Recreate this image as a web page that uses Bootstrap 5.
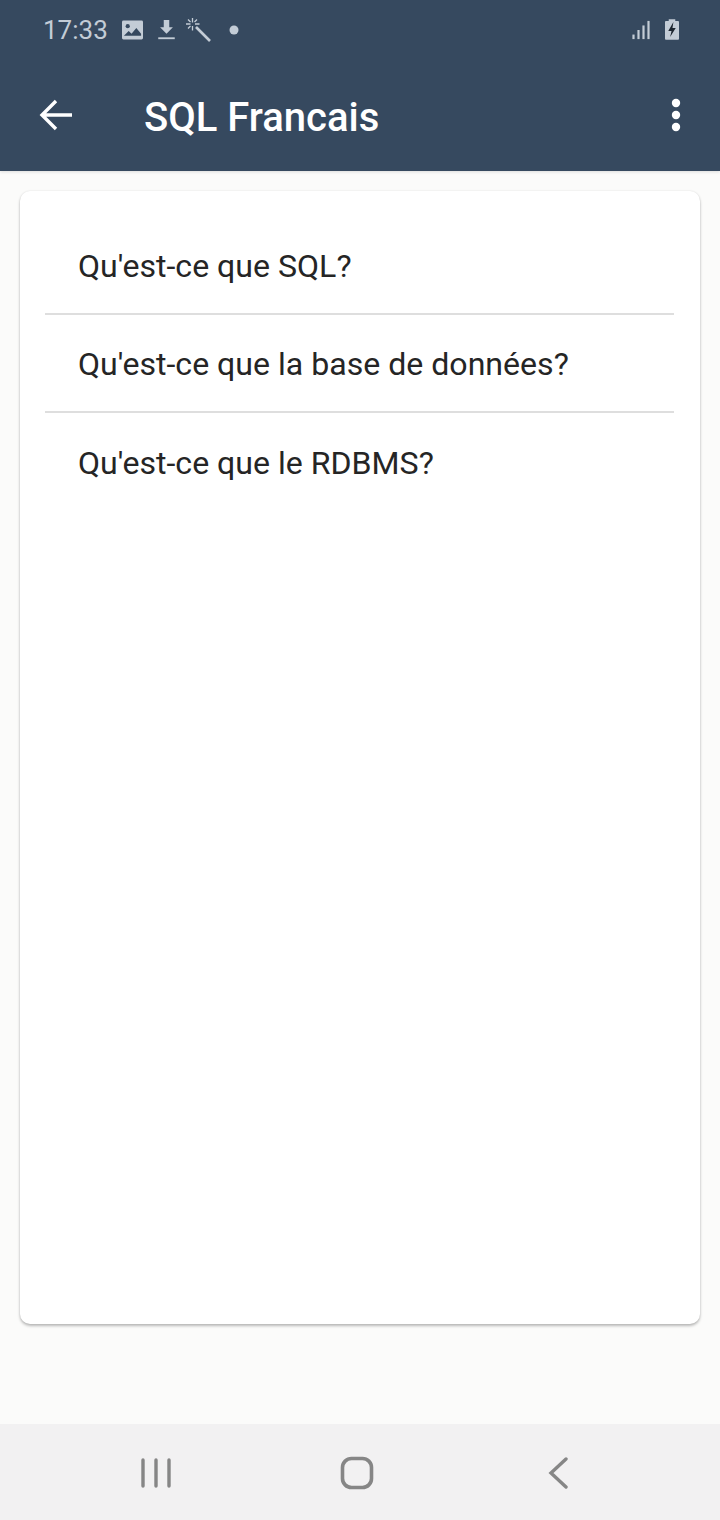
<!DOCTYPE html>
<html lang="fr">
<head>
  <meta charset="UTF-8" />
  <meta name="viewport" content="width=device-width, initial-scale=1" />
  <title>SQL Francais</title>
  <link href="https://cdn.jsdelivr.net/npm/bootstrap@5.3.2/dist/css/bootstrap.min.css" rel="stylesheet" />
  <style>
    body { background: #fbfbfa; font-family: Roboto, "Liberation Sans", sans-serif; height: 1520px; overflow: hidden; }
    .app-head { background: #36495f; height: 171px; box-shadow: 0 1px 3px rgba(0,0,0,.12); }
    .status-row { height: 59px; padding: 0 41px 0 43px; color: #c3ccd6; }
    .status-time { font-size: 26px; line-height: 1; width: 75px; }
    .ic-img { margin-left: 4px; }
    .ic-down { margin-left: 15px; }
    .ic-wand { margin-left: 11px; }
    .ic-dot { margin-left: 18px; }
    .ic-batt { margin-left: 14px; }
    .tool-row { height: 112px; padding: 0 39px 1px 39px; }
    .tool-title { font-size: 40px; font-weight: 500; color: #fff; margin: 7px 0 0 71px; line-height: 1; }
    .list-box { margin: 20px 20px 0; height: 1133px; border: 0; border-radius: 10px; padding: 26px 26px 0 25px; box-shadow: 0 2px 3px rgba(0,0,0,.26), 0 0 2px rgba(0,0,0,.1); }
    .list-line { height: 98px; padding: 2px 0 0 33px; font-size: 32.1px; color: #252525; border-bottom: 2px solid #dedede !important; }
    .list-line:last-child { border-bottom: 0 !important; }
    .nav-foot { position: absolute; left: 0; right: 0; top: 1424px; height: 96px; background: #f2f1f2; }
    .nav-slot { position: absolute; }
    .nav-menu { left: 141px; top: 34px; }
    .nav-home { left: 340px; top: 32px; }
    .nav-back { left: 548px; top: 33px; }
  </style>
</head>
<body>
  <header class="app-head">
    <div class="status-row d-flex align-items-center">
      <span class="status-time">17:33</span>
      <svg class="ic-img" width="21" height="20" viewBox="0 0 22 20"><rect width="22" height="20" rx="1.5" fill="#c3ccd6"/><circle cx="6" cy="6" r="2.2" fill="#36495f"/><path d="M2 16l5-5 3 3 5-6 5 6v2H2z" fill="#36495f"/></svg>
      <svg class="ic-down" width="17" height="22" viewBox="0 0 18 24"><path d="M6 1h6v8h4l-7 7-7-7h4z" fill="#c3ccd6"/><rect x="0" y="20" width="18" height="2" fill="#c3ccd6"/></svg>
      <svg class="ic-wand" width="25" height="24" viewBox="0 0 25 24" stroke="#c3ccd6" fill="none"><path d="M10 9l14 14" stroke-width="2.600"/><path d="M6.500 0v4.500M6.500 8v4.500M0 6h4.500M9 6h4.500M2 1.500l2.500 2.500M11 1.500L8.500 4M2 10.500L4.500 8" stroke-width="1.300"/></svg>
      <svg class="ic-dot" width="10" height="10" viewBox="0 0 10 10"><circle cx="5" cy="5" r="4.500" fill="#c3ccd6"/></svg>
      <svg class="ms-auto" width="19" height="20" viewBox="0 0 20 22" fill="#c3ccd6"><rect x="0" y="16" width="2.400" height="5"/><rect x="5.500" y="11" width="2.400" height="10"/><rect x="11" y="6" width="2.400" height="15"/><rect x="16.500" y="1" width="2.400" height="20"/></svg>
      <svg class="ic-batt" width="14" height="21" viewBox="0 0 15 22"><path d="M4 0h7v2h3a1 1 0 0 1 1 1v18a1 1 0 0 1-1 1H1a1 1 0 0 1-1-1V3a1 1 0 0 1 1-1h3z" fill="#c3ccd6"/><path d="M9 3L3.500 12.500h3.500L5.500 19 11.500 9.500H8z" fill="#1d2630"/></svg>
    </div>
    <div class="tool-row d-flex align-items-center">
      <svg width="34" height="32" viewBox="0 0 34 32" fill="none" stroke="#fff" stroke-width="3.400"><path d="M33 16H3M17 2L3 16l14 14"/></svg>
      <h1 class="tool-title">SQL Francais</h1>
      <svg class="ms-auto" width="10" height="34" viewBox="0 0 10 34" fill="#fff"><circle cx="5" cy="5" r="4.200"/><circle cx="5" cy="17" r="4.200"/><circle cx="5" cy="29" r="4.200"/></svg>
    </div>
  </header>
  <main class="card list-box">
    <div class="list-line d-flex align-items-center">Qu'est-ce que SQL?</div>
    <div class="list-line d-flex align-items-center">Qu'est-ce que la base de données?</div>
    <div class="list-line d-flex align-items-center">Qu'est-ce que le RDBMS?</div>
  </main>
  <footer class="nav-foot">
    <svg class="nav-slot nav-menu" width="30" height="30" viewBox="0 0 30 30" stroke="#868686" stroke-width="3.400" stroke-linecap="round"><path d="M2 2v26M15 2v26M28 2v26"/></svg>
    <svg class="nav-slot nav-home" width="34" height="34" viewBox="0 0 34 34" fill="none" stroke="#868686" stroke-width="3.600"><rect x="2.500" y="2.500" width="29" height="29" rx="9"/></svg>
    <svg class="nav-slot nav-back" width="22" height="32" viewBox="0 0 22 32" fill="none" stroke="#868686" stroke-width="3.400" stroke-linecap="round"><path d="M18 2L3 16l15 14"/></svg>
  </footer>
  <script src="https://cdn.jsdelivr.net/npm/bootstrap@5.3.2/dist/js/bootstrap.bundle.min.js"></script>
</body>
</html>
